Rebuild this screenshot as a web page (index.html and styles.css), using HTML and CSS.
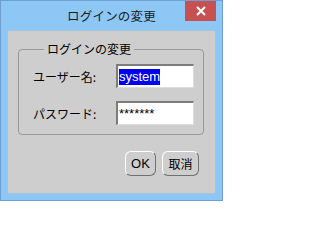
FILE: index.html
```html
<!DOCTYPE html>
<html lang="ja">
<head>
<meta charset="utf-8">
<title>ログインの変更</title>
<link rel="stylesheet" href="styles.css">
</head>
<body>
<div class="window">
  <div class="titlebar">
    <span class="spacer"></span>
    <span class="title">ログインの変更</span>
    <span class="close"><svg width="10" height="10" viewBox="0 0 10 10"><path d="M1 1 L9 9 M9 1 L1 9" stroke="#fff" stroke-width="2" fill="none"/></svg></span>
  </div>
  <div class="client">
    <fieldset class="group">
      <legend class="legend">ログインの変更</legend>
      <div class="form">
        <span class="label">ユーザー名:</span>
        <span class="field"><span class="sel">system</span></span>
        <span class="label">パスワード:</span>
        <span class="field"><span class="pw">*******</span></span>
      </div>
    </fieldset>
    <div class="buttons">
      <span class="btn ok">OK</span>
      <span class="btn cancel">取消</span>
    </div>
  </div>
</div>
</body>
</html>
```

FILE: styles.css
```css
body {
  margin: 0;
}
.window {
  width: 223px;
  height: 201px;
  box-sizing: border-box;
  border: 1px solid #6d9fd5;
  background: #8cc7f6;
  padding: 0 6px 6px;
  display: flex;
  flex-direction: column;
  font-family: "Noto Sans CJK JP", sans-serif;
}
.titlebar {
  height: 29px;
  display: grid;
  grid-template-columns: 1fr auto 1fr;
  align-items: start;
}
.title {
  font-size: 12.5px;
  line-height: 29px;
  color: #1c1c1c;
  letter-spacing: 0.2px;
}
.close {
  justify-self: end;
  width: 31px;
  height: 20px;
  background: #c75050;
  display: flex;
  align-items: center;
  justify-content: center;
}
.client {
  flex: 1;
  border: 1px solid #a6c2df;
  background: #cecece;
  display: flex;
  flex-direction: column;
}
.group {
  margin: 10px 11px 0 10px;
  padding: 7px 8px 9px 14px;
  border: 1px solid #999;
  border-radius: 4px;
  min-width: 0;
}
.legend {
  font-size: 12px;
  line-height: 16px;
  padding: 0 3px;
  margin-left: 11px;
  color: #000;
}
.form {
  display: grid;
  grid-template-columns: 83px 78px;
  row-gap: 13px;
  align-items: center;
}
.label {
  font-size: 12px;
  color: #000;
}
.field {
  height: 24px;
  box-sizing: border-box;
  background: #fff;
  border-style: solid;
  border-width: 2px 1px 1px 2px;
  border-color: #7c7c7c #dcdcdc #dcdcdc #7c7c7c;
  display: flex;
  align-items: center;
  padding-left: 1px;
  font-family: "Liberation Sans", sans-serif;
  font-size: 13px;
}
.sel {
  background: #0000f0;
  color: #fff;
  line-height: 16px;
}
.pw {
  color: #000;
  line-height: 16px;
}
.buttons {
  display: flex;
  justify-content: flex-end;
  gap: 6px;
  margin: 16px 16px 0 0;
}
.btn {
  height: 25px;
  box-sizing: border-box;
  border: 1px solid;
  border-color: #fff #707070 #707070 #fff;
  border-radius: 6px;
  display: flex;
  align-items: center;
  justify-content: center;
  color: #000;
}
.ok {
  width: 31px;
  font-family: "Liberation Sans", sans-serif;
  font-size: 13px;
}
.cancel {
  width: 37px;
  font-size: 12px;
}
```
